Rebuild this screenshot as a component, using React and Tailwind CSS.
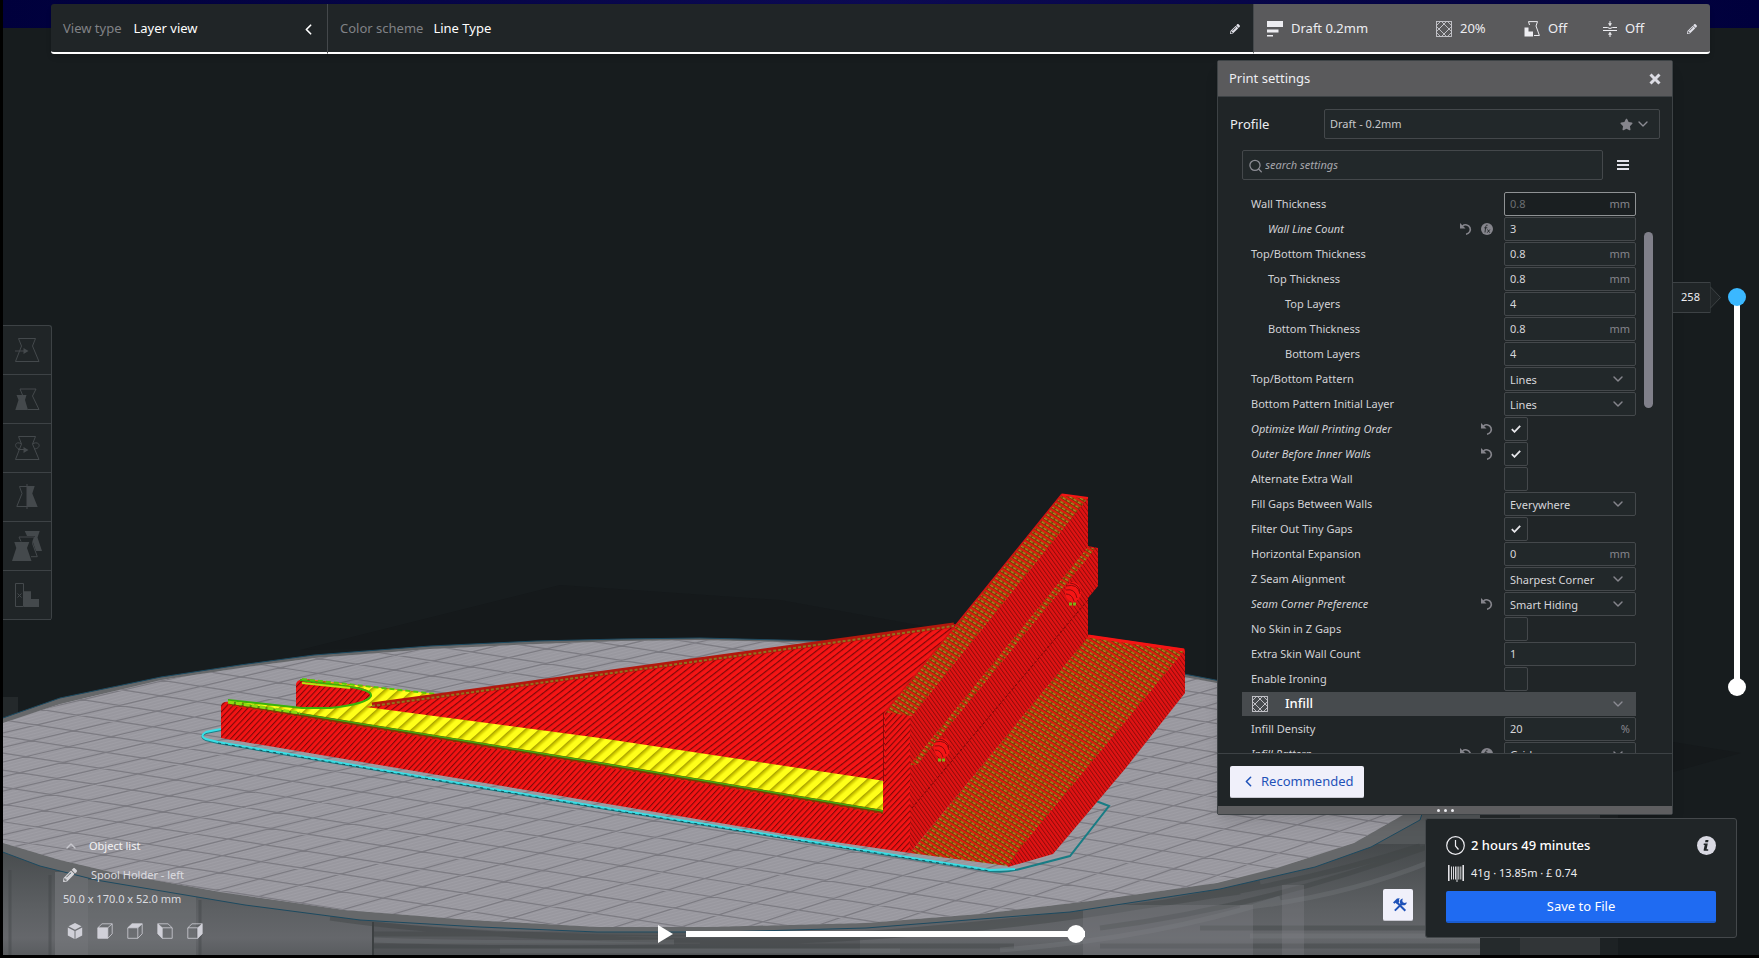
import React, { useState } from 'react';
import { ChevronDown, ChevronLeft, ChevronUp, Search } from 'lucide-react';
import { FaPencilAlt, FaStar } from 'react-icons/fa';

const SETTINGS = [
  { label: 'Wall Thickness', type: 'number', value: '0.8', unit: 'mm', inactive: true },
  { label: 'Wall Line Count', type: 'number', value: '3', depth: 1, changed: true, formula: true },
  { label: 'Top/Bottom Thickness', type: 'number', value: '0.8', unit: 'mm' },
  { label: 'Top Thickness', type: 'number', value: '0.8', unit: 'mm', depth: 1 },
  { label: 'Top Layers', type: 'number', value: '4', depth: 2 },
  { label: 'Bottom Thickness', type: 'number', value: '0.8', unit: 'mm', depth: 1 },
  { label: 'Bottom Layers', type: 'number', value: '4', depth: 2 },
  { label: 'Top/Bottom Pattern', type: 'select', value: 'Lines' },
  { label: 'Bottom Pattern Initial Layer', type: 'select', value: 'Lines' },
  { label: 'Optimize Wall Printing Order', type: 'check', value: true, changed: true },
  { label: 'Outer Before Inner Walls', type: 'check', value: true, changed: true },
  { label: 'Alternate Extra Wall', type: 'check', value: false },
  { label: 'Fill Gaps Between Walls', type: 'select', value: 'Everywhere' },
  { label: 'Filter Out Tiny Gaps', type: 'check', value: true },
  { label: 'Horizontal Expansion', type: 'number', value: '0', unit: 'mm' },
  { label: 'Z Seam Alignment', type: 'select', value: 'Sharpest Corner' },
  { label: 'Seam Corner Preference', type: 'select', value: 'Smart Hiding', changed: true },
  { label: 'No Skin in Z Gaps', type: 'check', value: false },
  { label: 'Extra Skin Wall Count', type: 'number', value: '1' },
  { label: 'Enable Ironing', type: 'check', value: false },
  { label: 'Infill', type: 'category' },
  { label: 'Infill Density', type: 'number', value: '20', unit: '%' },
  { label: 'Infill Pattern', type: 'select', value: 'Grid', changed: true, formula: true },
];

const INDENT = ['pl-[9px]', 'pl-[26px]', 'pl-[43px]'];

function InfillIcon({ className }) {
  return (
    <svg viewBox="0 0 16 16" className={className} fill="none" stroke="currentColor" strokeWidth="0.9" aria-hidden="true">
      <rect x="0.5" y="0.5" width="15" height="15" />
      <path d="M0 5 5 0M0 11 11 0M5 16 16 5M11 16 16 11M0 11l5 5M0 5l3 3M8 13l3 3M5 0l3 3M13 8l3 3M11 0l5 5" />
      <path d="M8 3l5 5-5 5-5-5z" />
    </svg>
  );
}

function SupportIcon() {
  return (
    <svg viewBox="0 0 16 16" className="h-4 w-4" aria-hidden="true">
      <path d="M4.500 .6H13.500L12 5 15.400 14.500H10M4.500 .6 5.500 4" fill="none" stroke="currentColor" strokeWidth="1" />
      <path d="M.5 6.500H4.500V10.500H9V15.400H.5z" fill="currentColor" />
    </svg>
  );
}

function AdhesionIcon() {
  return (
    <svg viewBox="0 0 14 16" className="h-4 w-3.5" fill="none" stroke="currentColor" aria-hidden="true">
      <path d="M0 6.500h4.500q2.500 2 5 0H14M0 9.500h14M7 0v3M7 16v-3" />
      <path d="M5.500 2.500h3L7 5zM5.500 13.500h3L7 11z" fill="currentColor" strokeWidth="0.5" />
    </svg>
  );
}

function LayerHeightIcon() {
  return (
    <svg viewBox="0 0 16 16" className="h-4 w-4" fill="currentColor" aria-hidden="true">
      <path d="M0 0h16v6H0zM0 8.500h11.500v3H0zM0 14h6v1.500H0z" />
    </svg>
  );
}

function UndoIcon() {
  return (
    <svg viewBox="0 0 12 12" className="h-3 w-3" aria-hidden="true">
      <path d="M2.500 3A4.700 4.700 0 1 1 6 11.200" fill="none" stroke="currentColor" strokeWidth="1.600" />
      <path d="M0 0v5.500h5.500z" fill="currentColor" />
    </svg>
  );
}

function FormulaIcon() {
  return (
    <svg viewBox="0 0 12 12" className="h-3 w-3" aria-hidden="true">
      <circle cx="6" cy="6" r="6" fill="currentColor" />
      <path d="M6.600 2.200C5 1.800 4.800 3 4.600 4.500L4 9.500M3.300 4.800h3M6.500 6.500l2.200 3.200M8.900 6.500 6.200 9.700" fill="none" stroke="#202527" strokeWidth="0.9" />
    </svg>
  );
}

function SpoolIcon() {
  return (
    <svg viewBox="0 0 16 17" className="h-[17px] w-4" fill="none" stroke="currentColor" aria-hidden="true">
      <path d="M.8 0v16M15.200 0v16" strokeWidth="1.500" />
      <path d="M3.500 1.500v13M5.500 1.500v13M7.500 1.500v13M9 1.500V17M10.800 1.500v13M12.800 1.500v13" strokeWidth="0.9" />
    </svg>
  );
}

function ToolsIcon() {
  return (
    <svg viewBox="0 0 14 14" className="ml-1 h-3.5 w-3.5" aria-hidden="true">
      <path d="M3.800 4.200 12.300 12.700M1.800 12.600 9.300 5.200" stroke="currentColor" strokeWidth="2" fill="none" />
      <path d="M0 4.500 4 .6 6.800.3 6 1.500 6.300 3.800 4 6 2.700 4.800 1.500 5.800z" fill="currentColor" />
      <path d="M9.800.6a3.400 3.400 0 1 0 3.900 3.600L11.800 5.100 9.800 4.300 9.300 2.500z" fill="currentColor" />
    </svg>
  );
}

function Cube({ face }) {
  const outline = 'M.8 4.800h10v10.500H.8zM.8 4.800 5 .8h10.200M10.800 4.800 15.200.8v10L10.800 15.300';
  const flipped = 'M15.200 4.800h-10v10.500h10zM15.200 4.800 11 .8H.8M5.200 4.800.8.8v10l4.400 4.500';
  const filled = {
    front: 'M.8 4.800h10v10.500H.8z',
    top: 'M.8 4.800 5 .8h10.200l-4.400 4z',
    left: 'M5.200 4.800.8.8v10l4.400 4.500z',
    right: 'M10.800 4.800 15.200.8v10L10.800 15.300z',
  };
  return (
    <svg viewBox="0 0 16 16" className="h-4 w-4" aria-hidden="true">
      {face === '3d' ? (
        <path d="M8 0l6.500 3.200L8 6.700 1.500 3.200zM.8 4.500 7.500 8v8L.8 12.500zM15.200 4.500 8.500 8v8l6.700-3.500z" fill="currentColor" />
      ) : (
        <>
          <path d={face === 'left' ? flipped : outline} fill="none" stroke="currentColor" strokeWidth="0.8" />
          <path d={filled[face]} fill="currentColor" />
        </>
      )}
    </svg>
  );
}

const TOOLS = [
  {
    name: 'Move',
    art: (
      <>
        <path d="M15.500 12.500h17L29.500 20 36 35.500H12.500L18.500 20z" fill="none" stroke="currentColor" />
        <path d="M12 25h10" stroke="currentColor" />
        <path d="M20.500 22 25.500 25 20.500 28z" fill="currentColor" />
      </>
    ),
  },
  {
    name: 'Scale',
    art: (
      <>
        <path d="M19.500 20 17 14H33L29.500 21 36 34.500H25" fill="none" stroke="currentColor" />
        <path d="M13.500 20h10L22 25l3 10H12.300L15.500 25z" fill="currentColor" />
      </>
    ),
  },
  {
    name: 'Rotate',
    art: (
      <>
        <path d="M15.500 12.500h17L29.500 20 36 35.500H12.500L18.500 20z" fill="none" stroke="currentColor" />
        <path d="M18 19.500c-7-3-7 5-1 5.500M30 19.500c7-3 9 5 1 5.500M15 25.500h7" fill="none" stroke="currentColor" />
        <path d="M20.500 23 25.500 26 20.500 29z" fill="currentColor" />
      </>
    ),
  },
  {
    name: 'Mirror',
    art: (
      <>
        <path d="M24 13.500H16.500L19 20.500 13.800 33.500H24" fill="none" stroke="currentColor" />
        <path d="M24 13h7.700L29.300 20.500 34.700 34H24z" fill="currentColor" />
        <path d="M24 11v25" stroke="currentColor" />
      </>
    ),
  },
  {
    name: 'Per model settings',
    art: (
      <>
        <path d="M21.700 9h15L34.500 15.500 39 29H33L29.500 19 32 14H24z" fill="currentColor" />
        <path d="M18 19.500 16 15h15.500L29.500 21.500 34.300 34.700H28" fill="none" stroke="currentColor" />
        <path d="M11.300 20h15L24 26l4.500 13H9L13.300 26z" fill="currentColor" />
      </>
    ),
  },
  {
    name: 'Support blocker',
    art: (
      <>
        <path d="M12.500 12.500h8v23h-8zM14.500 22.500l4 4M18.500 22.500l-4 4" fill="none" stroke="currentColor" />
        <path d="M21 20.300h7V28h8v8H21z" fill="currentColor" />
      </>
    ),
  },
];

// Build plate grid: one family falls to the right, the other rises and steepens
const GRID_DOWN = Array.from({ length: 42 }, (_, i) => {
  const y = 440 + i * 13 + i * i * 0.09;
  return `M0 ${y.toFixed(1)}L1500 ${(y + 232).toFixed(1)}`;
}).join('');

const GRID_UP = Array.from({ length: 48 }, (_, i) => {
  const x = -600 + i * 62;
  const slope = 0.235 + Math.max(0, x) * 0.0001;
  return `M${x - 700} ${(860 + 700 * slope).toFixed(1)}L${x + 1100} ${(860 - 1100 * slope).toFixed(1)}`;
}).join('');

const PLATE =
  'M0 724 60 704 161 680 240 668 314 658 430 649 536 644 621 641 700 640 821 643 1000 655 1184 677 1300 698 1390 730 1430 770 1403 815 1354 843 1277 868 1217 883 1090 901 980 914 866 923 710 927 597 927 470 920 344 910 220 892 115 873 60 860 0 842z';
const PLATE_RIM =
  'M0 719 60 698 161 677 240 665 314 655 430 646 536 641 621 639 700 638 821 641 1000 652 1184 674 1320 700 1440 760 1420 820 1371 847 1315 867 1220 889 1070 912 866 928 720 932 597 932 480 927 360 920 245 905 96 880 40 866 0 851z';

function Scene() {
  return (
    <svg viewBox="0 0 1759 958" preserveAspectRatio="xMidYMid slice" className="absolute -left-[3px] top-0 h-screen w-screen max-w-none" aria-hidden="true">
      <defs>
        <linearGradient id="navy">
          <stop offset="0" stopColor="#00003c" />
          <stop offset="0.5" stopColor="#0c0a52" />
          <stop offset="1" stopColor="#00003c" />
        </linearGradient>
        <linearGradient id="base" x1="0" y1="0" x2="0" y2="1">
          <stop offset="0" stopColor="#45494b" />
          <stop offset="0.6" stopColor="#5d6063" />
          <stop offset="0.85" stopColor="#65676b" />
          <stop offset="1" stopColor="#595c5f" />
        </linearGradient>
        <linearGradient id="yellowBand">
          <stop offset="0" stopColor="#a19b00" />
          <stop offset="0.25" stopColor="#d6d000" />
          <stop offset="0.5" stopColor="#ffff1a" />
          <stop offset="1" stopColor="#ffff1a" />
        </linearGradient>
        <pattern id="front" width="4.200" height="20" patternUnits="userSpaceOnUse" patternTransform="rotate(43)">
          <rect width="4.200" height="20" fill="#f21414" />
          <rect width="1.100" height="20" fill="#7d0808" />
        </pattern>
        <pattern id="fin" width="5" height="20" patternUnits="userSpaceOnUse" patternTransform="rotate(52)">
          <rect width="5" height="20" fill="#f51515" />
          <rect width="1.200" height="20" fill="#7d0808" />
        </pattern>
        <pattern id="side" width="3.200" height="20" patternUnits="userSpaceOnUse" patternTransform="rotate(-36)">
          <rect width="3.200" height="20" fill="#e01313" />
          <rect width="0.900" height="20" fill="#8e0b0b" />
        </pattern>
        <pattern id="skin" width="9.500" height="20" patternUnits="userSpaceOnUse" patternTransform="rotate(48)">
          <rect width="9.500" height="20" fill="url(#yellowBand)" />
        </pattern>
        <pattern id="speckle" width="5" height="4.500" patternUnits="userSpaceOnUse" patternTransform="rotate(32)">
          <rect width="5" height="4.500" fill="#e8170f" />
          <rect y="1.700" width="5" height="2.800" fill="#7b3c04" />
          <rect x="0" y="2.200" width="3.400" height="1.300" fill="#b3912a" />
        </pattern>
        <pattern id="fine" width="6" height="3" patternUnits="userSpaceOnUse" patternTransform="rotate(-15)">
          <rect width="6" height="1" fill="#a5a4ab" />
        </pattern>
        <clipPath id="plateClip">
          <path d={PLATE} />
        </clipPath>
      </defs>

      <rect width="1759" height="958" fill="#171c1e" />
      <rect width="1759" height="28" fill="url(#navy)" />
      <path d="M560 585 780 600 1000 640 300 650zM1673 742 1741 753 1673 772z" fill="#15191b" />

      {/* Printer base below the plate */}
      <path d="M0 842 H1480V955H0z" fill="url(#base)" />
      <path d="M3 697h15v30H3z" fill="#24292b" />
      <path d="M1480 810h40v145h-40z" fill="#252a2c" />
      <path d="M1520 810h80v145h-80z" fill="#313537" />
      <path d="M1600 810h18v145h-18z" fill="#1d2224" />
      <path d="M1217 812h263v32h-263z" fill="#54585a" />
      <path d="M55 872h33v83H55z" fill="#7d8084" opacity="0.5" />
      <path d="M88 880h108v75H88z" fill="#7a7d82" opacity="0.35" />
      <path d="M10 870v85M50 875v80M200 900v55" stroke="#3f4345" strokeWidth="3" opacity="0.4" />
      <path d="M373 922v33" stroke="#303436" strokeWidth="1.500" />
      <path d="M374 922Q600 942 860 932L860 955H374z" fill="#3f4345" opacity="0.35" />
      <path
        d="M330 918q120 18 330 22T1240 892M374 934h400M374 946h640M700 944q330-6 560-62M1100 928q160-20 330-82M1130 908q160-20 290-62M1200 928h280M1100 946h380"
        fill="none" stroke="#3c4042" strokeWidth="5" opacity="0.4"
      />
      <path
        d="M374 940q100 4 300 2M1000 950q160-12 280-52M1240 908q100-10 190-46M1250 936h230M500 951h400"
        fill="none" stroke="#85878b" strokeWidth="5" opacity="0.25"
      />
      <path d="M1282 885h22v70h-22zM1083 905h170v50h-170z" fill="#83868a" opacity="0.3" />

      <path d={PLATE_RIM} fill="#66686a" stroke="#1d4a60" strokeWidth="1" />
      <path d={PLATE} fill="#99989f" />
      <g clipPath="url(#plateClip)">
        <rect y="630" width="1500" height="310" fill="url(#fine)" opacity="0.5" />
        <path d={GRID_DOWN + GRID_UP} stroke="#7c7b82" strokeWidth="1.200" fill="none" />
      </g>

      {/* Skirt */}
      <path
        d="M221 730 206 733Q199 737 206 740L218 743 600 808 900 857 990 871Q1005 873 1020 869L1070 856 1109 806 1096 801"
        fill="none" stroke="#187c84" strokeWidth="2"
      />
      <path d="M221 729 206 732Q199 736 206 739L218 742 600 807 900 856 990 870 1015 869" fill="none" stroke="#39dfe6" strokeWidth="2" />
      <path d="M218 743 600 808 900 857 990 871" fill="none" stroke="#0f4e54" strokeWidth="1" strokeDasharray="3 4" />

      {/* Rear prong and skin surface */}
      <path d="M296 684Q297 679 306 679L436 694 400 709 340 720 296 707z" fill="url(#front)" />
      <path d="M302 679 436 694 600 700 883 781V813L600 764 226 704Q232 699 240 701L302 708 330 708Q368 703 371 695 372 689 350 686z" fill="url(#skin)" />
      <path d="M300 680 350 687Q372 690 371 696 367 704 330 708H302L228 700" fill="none" stroke="#39b30a" strokeWidth="2" />
      <path d="M302 679 436 694" stroke="#58c80c" strokeWidth="2" strokeDasharray="5 3" />
      <path d="M302 683 350 688" stroke="#b4e60f" strokeWidth="2" />

      {/* Front face */}
      <path d="M221 706Q222 701 230 702L600 765 883 813 883 711 910 715 910 853 808 838 221 738z" fill="url(#front)" />
      <path d="M228 703 600 764 883 812" fill="none" stroke="#7b3c04" strokeWidth="4" />
      <path d="M228 702 600 763 883 811" fill="none" stroke="#3fae12" strokeWidth="1.500" />
      <path d="M228 705 600 766 883 814" fill="none" stroke="#e8170f" strokeWidth="1.500" strokeDasharray="4 3" />
      <path d="M228 702 300 713" stroke="#8bdc10" strokeWidth="3" strokeDasharray="6 2" />

      {/* Triangular fin */}
      <path d="M366 707 956 624 970 640 885 713V781L600 738z" fill="url(#fin)" />
      <path d="M372 705 954 625" stroke="#b3170d" strokeWidth="5" />
      <path d="M372 706 954 626" stroke="#8f7320" strokeWidth="2" strokeDasharray="3 2" />

      {/* Base block */}
      <path d="M1088 635 1185 649V693L1125 769 1053 854 1008 867 1000 850z" fill="url(#side)" />
      <path d="M1088 636 1184 651 1021 847 1008 866 910 853z" fill="url(#speckle)" />
      <path d="M1088 636 1184 650" stroke="#f51515" strokeWidth="3" />

      {/* Upright wall */}
      <path d="M1088 498V546L1098 548V586L1088 598V637L910 853V714z" fill="url(#side)" />
      <path d="M1062 494 1088 498 912 716 885 712 956 625z" fill="url(#speckle)" />
      <path d="M1062 494 956 625 885 712" fill="none" stroke="#d01313" strokeWidth="1.500" />
      <path d="M1062 494.500 1088 498" stroke="#f51515" strokeWidth="2" />
      <path d="M1088 547 1095 549 917 765 910 765z" fill="url(#speckle)" />
      <path d="M883.500 713V781" stroke="#8a0909" />
      <path d="M1088 600 912 808" stroke="#7d0808" strokeDasharray="3 2" />
      {[[1073, 592], [942, 748]].map(([x, y]) => (
        <g key={x} fill="none" stroke="#8e0b0b">
          <ellipse cx={x} cy={y} rx="8" ry="10" fill="#f51515" stroke="none" />
          <path d={`M${x - 7} ${y - 6}q12-3 14 8M${x - 7} ${y - 2}q9-2 11 8M${x - 3} ${y - 9}q9 1 10 9M${x - 7} ${y + 2}q6 0 8 7`} />
          <path d={`M${x - 4} ${y + 12}h7`} stroke="#7fae16" strokeWidth="3" strokeDasharray="3 1" />
        </g>
      ))}
    </svg>
  );
}

const BOX = 'rounded-[2px] border border-[#44484b] bg-[#22282a]';

function SettingField({ id, setting }) {
  if (setting.type === 'check') {
    return (
      <div className="relative h-6 w-6">
        <input id={id} type="checkbox" defaultChecked={setting.value} className={`peer block h-6 w-6 appearance-none ${BOX}`} />
        <svg viewBox="0 0 10 8" className="pointer-events-none absolute left-[7px] top-2 hidden h-2 w-2.5 peer-checked:block" aria-hidden="true">
          <path d="M.8 4.200 3.500 6.800 9.200.8" fill="none" stroke="#e6e6ea" strokeWidth="1.800" />
        </svg>
      </div>
    );
  }
  if (setting.type === 'select') {
    return (
      <div className="relative h-6">
        <select id={id} defaultValue={setting.value} className={`block h-6 w-full appearance-none pl-[5px] pt-0.5 text-[11px] text-[#d6d6da] ${BOX}`}>
          <option>{setting.value}</option>
        </select>
        <ChevronDown size={16} strokeWidth={2.2} className="pointer-events-none absolute right-2.5 top-1 text-[#85858c]" />
      </div>
    );
  }
  return (
    <div
      className={`flex h-6 items-center rounded-[2px] border px-[5px] ${
        setting.inactive ? 'border-[#8f9294] bg-[#1a1f21]' : 'border-[#44484b] bg-[#22282a]'
      }`}
    >
      <input
        id={id}
        type="text"
        defaultValue={setting.value}
        className={`w-full min-w-0 bg-transparent outline-none ${setting.inactive ? 'text-[#6c6f72]' : 'text-[#d6d6da]'}`}
      />
      {setting.unit && <span className="text-[#85858c]">{setting.unit}</span>}
    </div>
  );
}

function SettingRow({ setting, index }) {
  const id = `setting-${index}`;
  if (setting.type === 'category') {
    return (
      <button className="flex h-6 w-full shrink-0 items-center bg-[#474b4e] px-2.5 text-left text-[13px] font-medium text-white">
        <InfillIcon className="mr-[17px] h-4 w-4 text-[#c8c8ce]" />
        <span className="flex-1">{setting.label}</span>
        <ChevronDown size={16} strokeWidth={2} className="text-[#8c8c94]" />
      </button>
    );
  }
  return (
    <div className="flex h-6 shrink-0 items-center">
      <label htmlFor={id} className={`flex-1 ${INDENT[setting.depth || 0]} ${setting.changed ? 'italic' : ''}`}>
        {setting.label}
      </label>
      <div className="mr-[11px] flex gap-[9px] text-[#85858c]">
        {setting.changed && <button aria-label="Reset to profile value"><UndoIcon /></button>}
        {setting.formula && <button aria-label="Restore calculated value"><FormulaIcon /></button>}
      </div>
      <div className="w-[132px]">
        <SettingField id={id} setting={setting} />
      </div>
    </div>
  );
}

function PrintSettings() {
  return (
    <section className="flex min-h-0 flex-1 flex-col rounded-[2px] border border-[#3d4245] bg-[#202527] shadow-lg">
      <header className="flex h-9 shrink-0 items-center justify-between border-b border-[#3d4245] bg-[#5a5a5c] px-[11px] text-[13px] text-[#ededf1]">
        <h2>Print settings</h2>
        <button aria-label="Close">
          <svg viewBox="0 0 12 12" className="h-3 w-3" aria-hidden="true">
            <path d="M1.500 1.500l9 9M10.500 1.500l-9 9" stroke="#dcdce4" strokeWidth="3" />
          </svg>
        </button>
      </header>

      <div className="flex items-center px-3 pt-3">
        <span className="w-[94px] pt-px text-[13px] text-[#ededf1]">Profile</span>
        <button className={`flex h-[30px] flex-1 items-center pl-[5px] pr-2 text-left text-[11px] text-[#c8c8cc] ${BOX}`}>
          <span className="flex-1">Draft - 0.2mm</span>
          <FaStar size={13} className="text-[#85858c]" />
          <ChevronDown size={16} strokeWidth={2} className="ml-0.5 text-[#8c8c94]" />
        </button>
      </div>

      <div className="mt-[11px] flex items-center pl-6">
        <label className={`flex h-[30px] w-[361px] items-center pl-[5px] pt-px ${BOX}`}>
          <Search size={16} className="text-[#8c8c94]" />
          <input
            type="text"
            aria-label="Search settings"
            placeholder="search settings"
            className="ml-0.5 w-full bg-transparent text-[11px] italic outline-none placeholder:text-[#a6a6ac]"
          />
        </label>
        <button aria-label="Setting visibility" className="ml-3.5 flex w-3 flex-col gap-0.5">
          <span className="h-0.5 bg-[#e2e2ea]" />
          <span className="h-0.5 bg-[#e2e2ea]" />
          <span className="h-0.5 bg-[#e2e2ea]" />
        </button>
      </div>

      <div className="mt-3 flex min-h-0 flex-1 gap-2 pl-6 text-[11px] text-[#d2d2d6]">
        <div className="flex w-[394px] flex-col gap-px overflow-hidden">
          {SETTINGS.map((s, i) => <SettingRow key={s.label} setting={s} index={i} />)}
        </div>
        <div className="mt-10 h-44 w-[9px] rounded-full bg-[#80808a]" />
      </div>

      <footer className="shrink-0 border-t border-[#3d4245] px-3 pb-2 pt-3">
        <button className="flex h-8 items-center gap-1 rounded-[2px] border-b border-[#c9c9d2] bg-[#f0f0fa] px-2.5 text-[13px] text-[#1f52b8]">
          <ChevronLeft size={17} strokeWidth={2.2} />
          Recommended
        </button>
      </footer>
      <div className="flex h-2 shrink-0 items-center justify-center gap-1 bg-[#5e5e60]">
        {[0, 1, 2].map((d) => <span key={d} className="h-[3px] w-[3px] rounded-full bg-[#ededf1]" />)}
      </div>
    </section>
  );
}

const THUMB = '[&::-webkit-slider-thumb]:h-[18px] [&::-webkit-slider-thumb]:w-[18px] [&::-webkit-slider-thumb]:appearance-none [&::-webkit-slider-thumb]:rounded-full';

function LayerSlider() {
  const [top, setTop] = useState(258);
  const [bottom, setBottom] = useState(0);
  const vertical = 'absolute inset-0 h-full w-[18px] appearance-none bg-transparent [writing-mode:vertical-lr] [direction:rtl]';
  return (
    <div className="flex w-[86px] shrink-0 items-start pt-[222px]">
      <div className="flex h-[31px] w-[37px] items-center justify-center border-y border-[#3d4245] bg-[#202527] pr-0.5 text-[11px] text-[#ededf1]">
        {top}
      </div>
      <svg viewBox="0 0 11 31" className="h-[31px] w-[11px]" aria-hidden="true">
        <path d="M0 0v31M0 4.500 10.500 15.500 0 26.500" fill="#202527" stroke="#3d4245" />
      </svg>
      <div className="relative ml-[7px] mt-1.5 flex h-[408px] w-[18px] justify-center">
        <div className="my-2 w-1.5 bg-white" />
        <input
          type="range" aria-label="Lowest layer" min="0" max="258" value={bottom}
          onChange={(e) => setBottom(Number(e.target.value))}
          className={`${vertical} ${THUMB} [&::-webkit-slider-thumb]:bg-white`}
        />
        <input
          type="range" aria-label="Highest layer" min="0" max="258" value={top}
          onChange={(e) => setTop(Number(e.target.value))}
          className={`${vertical} ${THUMB} [&::-webkit-slider-thumb]:bg-[#3bb8ff]`}
        />
      </div>
    </div>
  );
}

function JobCard() {
  return (
    <div className="flex items-end justify-end gap-3 pr-[22px]">
      <button aria-label="Preview tools" className="mb-[17px] flex h-8 w-[30px] items-center justify-center rounded-[2px] border-b border-[#c9c9d2] bg-[#f0f0fa] text-[#1f52b8]">
        <ToolsIcon />
      </button>
      <section className="flex h-[120px] w-[312px] flex-col rounded-[3px] border border-[#44484b] bg-[#202527] px-5 pt-4">
        <div className="flex h-5 items-center text-[13px] font-medium text-white">
          <svg viewBox="0 0 19 19" className="mr-1.5 h-[19px] w-[19px]" fill="none" stroke="#ededf1" aria-hidden="true">
            <circle cx="9.500" cy="9.500" r="8.800" strokeWidth="1.200" />
            <path d="M9.500 4v6l3 3.500" strokeWidth="1.200" />
          </svg>
          <span className="flex-1 pt-px">2 hours 49 minutes</span>
          <button aria-label="Print details">
            <svg viewBox="0 0 19 19" className="h-[19px] w-[19px]" aria-hidden="true">
              <circle cx="9.500" cy="9.500" r="9.500" fill="#d9d9e2" />
              <path d="M8.500 4h3l-.4 2.200h-3zM6.800 7.500h4l-1.200 5.700h1.600v1.600H6.700v-1.200l1-4.600H6.600z" fill="#202527" />
            </svg>
          </button>
        </div>
        <div className="mt-2.5 flex h-[17px] items-center gap-[7px] pl-0.5 text-[11px] text-[#ededf1]">
          <SpoolIcon />
          41g · 13.85m · £ 0.74
        </div>
        <button className="mt-[9px] h-8 rounded-[2px] border-b-2 border-[#1a5cd0] bg-[#1f6bf2] pt-0.5 text-[13px] text-white">Save to File</button>
      </section>
    </div>
  );
}

export default function App() {
  return (
    <div className="relative flex h-screen flex-col overflow-hidden border-b-[3px] border-l-[3px] border-black bg-[#171c1e] font-['Noto_Sans',sans-serif]">
      <Scene />

      <header className="relative ml-12 mr-[49px] mt-1 flex h-[50px] shrink-0 rounded-[3px] text-[13px] shadow-md">
        <button className="flex w-[277px] items-center rounded-l-[3px] border-b-2 border-r border-b-white border-r-[#44484b] bg-[#202527] pl-3 pr-2.5 pt-0.5 text-left">
          <span className="text-[#808286]">View type</span>
          <span className="ml-3 flex-1 text-white">Layer view</span>
          <ChevronLeft size={17} strokeWidth={2.4} className="text-white" />
        </button>
        <button className="flex flex-1 items-center border-b-2 border-r border-b-white border-r-[#44484b] bg-[#202527] pl-3 pr-[13px] pt-0.5 text-left">
          <span className="text-[#808286]">Color scheme</span>
          <span className="ml-2.5 flex-1 text-white">Line Type</span>
          <FaPencilAlt size={10} className="text-[#e2e2ea]" />
        </button>
        <button className="flex w-[456px] items-center rounded-r-[3px] border-b-2 border-white bg-[#5a5a5c] pl-[13px] pr-[13px] pt-0.5 text-left text-[#ededf1]">
          <span className="flex w-[169px] items-center gap-2"><LayerHeightIcon />Draft 0.2mm</span>
          <span className="flex w-[88px] items-center gap-2"><InfillIcon className="h-4 w-4 text-[#c8c8ce]" />20%</span>
          <span className="flex w-[79px] items-center gap-2"><SupportIcon />Off</span>
          <span className="flex flex-1 items-center gap-2"><AdhesionIcon />Off</span>
          <FaPencilAlt size={10} className="text-[#e2e2ea]" />
        </button>
      </header>

      <main className="relative flex min-h-0 flex-1">
        <aside className="flex flex-col justify-between pb-4 pt-[271px]">
          <nav className="flex w-[49px] flex-col rounded-r-[3px] border-r border-t border-[#3d4245] bg-[#202527]">
            {TOOLS.map((tool) => (
              <button key={tool.name} aria-label={tool.name} className="h-[49px] border-b border-[#3d4245] text-[#44494c]">
                <svg viewBox="0 0 48 48" className="h-12 w-12" aria-hidden="true">{tool.art}</svg>
              </button>
            ))}
          </nav>

          <div className="pl-[60px] text-[11px] text-[#dcdce0]">
            <button className="flex h-5 items-center gap-2.5 text-[#f2f2f4]">
              <ChevronUp size={16} strokeWidth={2} className="text-[#c8c8ce]" />
              Object list
            </button>
            <button className="mt-[9px] flex h-5 items-center gap-3.5">
              <FaPencilAlt size={14} className="text-[#d6d6da]" />
              Spool Holder - left
            </button>
            <p className="mt-1 flex h-5 items-center">50.0 x 170.0 x 52.0 mm</p>
            <div className="mt-3.5 flex gap-3.5 pl-1 text-[#d0d0d8]">
              {['3d', 'front', 'top', 'left', 'right'].map((face) => (
                <button key={face} aria-label={`${face} view`}><Cube face={face} /></button>
              ))}
            </div>
          </div>
        </aside>

        <div className="flex flex-1 items-end justify-end gap-[13px] pb-3 pr-[132px]">
          <button aria-label="Play">
            <svg viewBox="0 0 16 18" className="h-[18px] w-4" aria-hidden="true"><path d="M1 0 16 9 1 18z" fill="#fff" /></svg>
          </button>
          <input
            type="range" aria-label="Path position" min="0" max="100" defaultValue="100"
            className={`h-[18px] w-[399px] appearance-none bg-transparent [&::-webkit-slider-runnable-track]:h-1.5 [&::-webkit-slider-runnable-track]:bg-white [&::-webkit-slider-thumb]:-mt-1.5 ${THUMB} [&::-webkit-slider-thumb]:bg-white`}
          />
        </div>

        <div className="flex w-[542px] shrink-0 flex-col gap-[3px] pb-[17px] pt-1.5">
          <div className="flex min-h-0 flex-1">
            <PrintSettings />
            <LayerSlider />
          </div>
          <JobCard />
        </div>
      </main>
    </div>
  );
}
